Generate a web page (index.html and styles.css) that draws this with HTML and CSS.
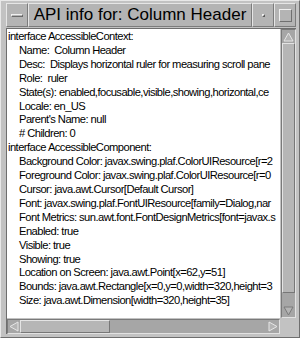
FILE: index.html
```html
<!DOCTYPE html>
<html>
<head>
<meta charset="utf-8">
<link rel="stylesheet" href="styles.css">
</head>
<body>
<div class="window">
  <div class="titlebar">
    <div class="btn menu-btn"><span class="bar"></span></div>
    <div class="title">API info for: Column Header</div>
    <div class="btn min-btn"><span class="dot"></span></div>
    <div class="btn max-btn"><span class="sq"></span></div>
  </div>
  <div class="client">
    <div class="pane">
      <div class="viewport">
        <div class="text">
          <div class="line">interface AccessibleContext:</div>
          <div class="line ind">Name:&nbsp; Column Header</div>
          <div class="line ind">Desc:&nbsp; Displays horizontal ruler for measuring scroll pane</div>
          <div class="line ind">Role:&nbsp; ruler</div>
          <div class="line ind">State(s): enabled,focusable,visible,showing,horizontal,ce</div>
          <div class="line ind">Locale: en_US</div>
          <div class="line ind">Parent's Name: null</div>
          <div class="line ind"># Children: 0</div>
          <div class="line">interface AccessibleComponent:</div>
          <div class="line ind">Background Color: javax.swing.plaf.ColorUIResource[r=2</div>
          <div class="line ind">Foreground Color: javax.swing.plaf.ColorUIResource[r=0</div>
          <div class="line ind">Cursor: java.awt.Cursor[Default Cursor]</div>
          <div class="line ind">Font: javax.swing.plaf.FontUIResource[family=Dialog,nar</div>
          <div class="line ind">Font Metrics: sun.awt.font.FontDesignMetrics[font=javax.s</div>
          <div class="line ind">Enabled: true</div>
          <div class="line ind">Visible: true</div>
          <div class="line ind">Showing: true</div>
          <div class="line ind">Location on Screen: java.awt.Point[x=62,y=51]</div>
          <div class="line ind">Bounds: java.awt.Rectangle[x=0,y=0,width=320,height=3</div>
          <div class="line ind">Size: java.awt.Dimension[width=320,height=35]</div>
        </div>
      </div>
      <div class="vscroll">
        <div class="arrow up"><svg width="11" height="10" viewBox="0 0 11 10"><polygon points="5.5,1 10,9 1,9" fill="#b4b4b4" stroke="#e6e6e6" stroke-width="1"/></svg></div>
        <div class="thumb vthumb"></div>
        <div class="trough"></div>
        <div class="arrow down"><svg width="11" height="10" viewBox="0 0 11 10"><polygon points="1,1 10,1 5.5,9" fill="#b4b4b4" stroke="#7a7a7a" stroke-width="1"/></svg></div>
      </div>
      <div class="hscroll">
        <div class="arrow left"><svg width="10" height="11" viewBox="0 0 10 11"><polygon points="1,5.5 9,1 9,10" fill="#b4b4b4" stroke="#e6e6e6" stroke-width="1"/></svg></div>
        <div class="thumb hthumb"></div>
        <div class="trough"></div>
        <div class="arrow right"><svg width="10" height="11" viewBox="0 0 10 11"><polygon points="1,1 9,5.5 1,10" fill="#b4b4b4" stroke="#e6e6e6" stroke-width="1"/></svg></div>
      </div>
      <div class="corner"></div>
    </div>
  </div>
</div>
</body>
</html>
```
FILE: styles.css
```css
html, body {
  margin: 0;
  padding: 0;
  background: #c2c2c2;
}
.window {
  width: 300px;
  height: 338px;
  box-sizing: border-box;
  background: #c2c2c2;
  border-top: 1px solid #e8e8e8;
  border-left: 1px solid #e8e8e8;
  border-right: 1px solid #6e6e6e;
  border-bottom: 1px solid #6e6e6e;
  padding: 2px 3px 3px 5px;
  display: flex;
  flex-direction: column;
}
.titlebar {
  height: 24px;
  display: flex;
  flex-direction: row;
  align-items: stretch;
  background: #b4b4b4;
}
.btn {
  box-sizing: border-box;
  border-top: 1px solid #e6e6e6;
  border-left: 1px solid #e6e6e6;
  border-right: 1px solid #7c7c7c;
  border-bottom: 1px solid #7c7c7c;
  background: #b4b4b4;
  display: flex;
  align-items: center;
  justify-content: center;
}
.menu-btn {
  width: 22px;
}
.menu-btn .bar {
  width: 12px;
  height: 3px;
  box-sizing: border-box;
  border-top: 1px solid #f0f0f0;
  border-left: 1px solid #f0f0f0;
  border-right: 1px solid #6a6a6a;
  border-bottom: 1px solid #6a6a6a;
}
.title {
  flex: 1;
  box-sizing: border-box;
  border-top: 1px solid #e6e6e6;
  border-left: 1px solid #e6e6e6;
  border-right: 1px solid #7c7c7c;
  border-bottom: 1px solid #7c7c7c;
  font-family: "Liberation Sans", Arial, sans-serif;
  font-size: 17px;
  line-height: 22px;
  color: #000;
  text-align: center;
  white-space: nowrap;
  overflow: hidden;
}
.min-btn {
  width: 22px;
}
.min-btn .dot {
  width: 3px;
  height: 3px;
  box-sizing: border-box;
  border-top: 1px solid #f0f0f0;
  border-left: 1px solid #f0f0f0;
  border-right: 1px solid #5a5a5a;
  border-bottom: 1px solid #5a5a5a;
}
.max-btn {
  width: 22px;
}
.max-btn .sq {
  width: 13px;
  height: 13px;
  box-sizing: border-box;
  border-top: 1px solid #efefef;
  border-left: 1px solid #efefef;
  border-right: 1px solid #707070;
  border-bottom: 1px solid #707070;
}
.client {
  flex: 1;
  margin-top: 1px;
  display: flex;
  min-height: 0;
}
.pane {
  flex: 1;
  display: grid;
  grid-template-columns: 1fr 15px;
  grid-template-rows: 1fr 15px;
  column-gap: 1px;
  row-gap: 1px;
  min-height: 0;
  border-left: 1px solid #6e6e6e;
  border-top: 1px solid #6e6e6e;
}
.viewport {
  background: #fff;
  overflow: hidden;
  min-width: 0;
  min-height: 0;
}
.text {
  font-family: "Liberation Sans", Arial, sans-serif;
  font-size: 11.2px;
  letter-spacing: -0.55px;
  line-height: 13.9px;
  color: #000;
  white-space: nowrap;
  padding-top: 1px;
}
.line {
  padding-left: 1px;
}
.line.ind {
  padding-left: 12px;
}
.vscroll {
  background: #a6a6a6;
  display: flex;
  flex-direction: column;
  box-sizing: border-box;
  border-left: 1px solid #7a7a7a;
  border-top: 1px solid #7a7a7a;
  border-right: 1px solid #e2e2e2;
  border-bottom: 1px solid #e2e2e2;
}
.hscroll {
  background: #a6a6a6;
  display: flex;
  flex-direction: row;
  box-sizing: border-box;
  border-left: 1px solid #7a7a7a;
  border-top: 1px solid #7a7a7a;
  border-right: 1px solid #e2e2e2;
  border-bottom: 1px solid #e2e2e2;
}
.arrow {
  display: flex;
  align-items: center;
  justify-content: center;
  flex: none;
}
.vscroll .arrow {
  height: 13px;
}
.hscroll .arrow {
  width: 12px;
}
.thumb {
  box-sizing: border-box;
  background: #b6b6b6;
  border-top: 1px solid #e4e4e4;
  border-left: 1px solid #e4e4e4;
  border-right: 1px solid #777;
  border-bottom: 1px solid #777;
}
.vthumb {
  height: 250px;
}
.hthumb {
  width: 90px;
}
.trough {
  flex: 1;
}
.corner {
  background: #c2c2c2;
}
```
